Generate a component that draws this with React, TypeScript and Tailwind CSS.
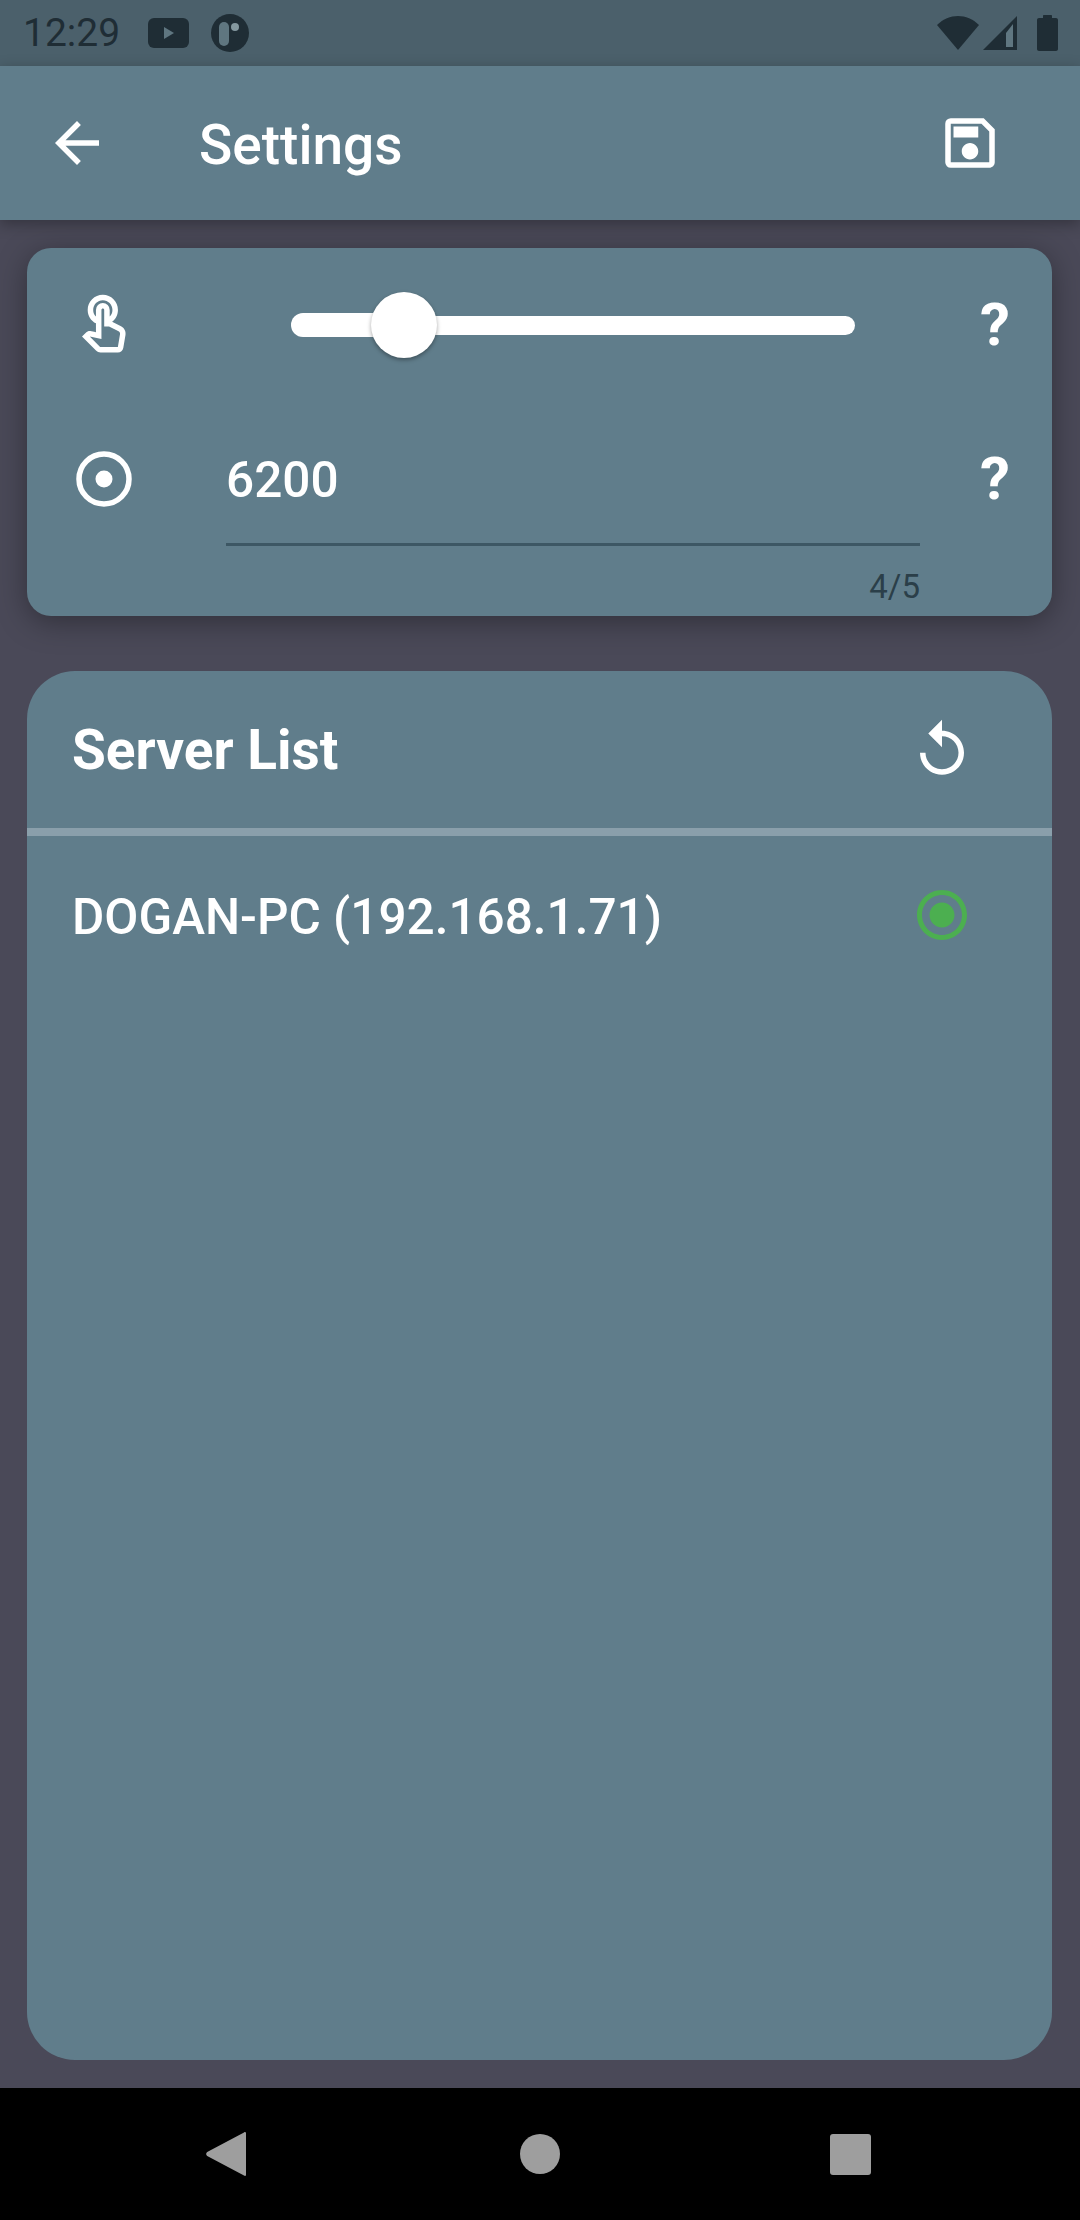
import { MdArrowBack, MdOutlineSave, MdOutlineTouchApp, MdRadioButtonChecked, MdReplay } from "react-icons/md";

const ink = "#1f2d35";

function StatusBar() {
  return (
    <div className="h-[66px] shrink-0 bg-[#4b606b] flex items-center pl-[23px] pr-[22px]">
      <span className="text-[39px] leading-none font-normal text-[#1f2d35] w-[93px]">12:29</span>
      <svg className="ml-[32px]" width="41" height="30" viewBox="0 0 41 30">
        <rect width="41" height="30" rx="6" fill={ink} />
        <path d="M16 9 L26 15 L16 21 Z" fill="#5f7680" />
      </svg>
      <svg className="ml-[22px]" width="38" height="38" viewBox="0 0 38 38">
        <circle cx="19" cy="19" r="19" fill={ink} />
        <rect x="8" y="8" width="10" height="24" rx="5" fill="#5f7680" />
        <circle cx="24" cy="13" r="4" fill="#84989f" />
      </svg>
      <div className="flex-1" />
      <svg width="42" height="34" viewBox="0 0 42 34">
        <path d="M0 9 C12 -3 30 -3 42 9 L21 34 Z" fill={ink} />
      </svg>
      <svg className="ml-[4px]" width="34" height="34" viewBox="0 0 34 34">
        <path d="M34 0 V34 H0 Z" fill={ink} />
        <path d="M23 17 L30 8 V31 H23 Z" fill="#5f7680" />
      </svg>
      <svg className="ml-[20px]" width="21" height="36" viewBox="0 0 21 36">
        <path d="M6 3 V1 C6 0.4 6.4 0 7 0 H14 C14.6 0 15 0.4 15 1 V3 H19 C20.1 3 21 3.9 21 5 V34 C21 35.1 20.1 36 19 36 H2 C0.9 36 0 35.1 0 34 V5 C0 3.9 0.9 3 2 3 Z" fill={ink} />
      </svg>
    </div>
  );
}

function Header() {
  return (
    <div className="relative z-10 h-[154px] shrink-0 bg-[#607d8b] flex items-center pl-[44px] pr-[77px] text-white shadow-[0_4px_14px_rgba(0,0,0,0.3)]">
      <MdArrowBack size={66} />
      <span className="ml-[89px] flex-1 text-[55px] pt-[4px] font-medium leading-none">Settings</span>
      <MdOutlineSave size={66} />
    </div>
  );
}

function Help() {
  return <span className="w-[66px] text-center text-[60px] font-bold leading-none text-white">?</span>;
}

function SettingsCard() {
  return (
    <div className="bg-[#607d8b] rounded-[24px] h-[368px] shrink-0 shadow-[0_6px_30px_rgba(0,0,0,0.35)] text-white">
      <div className="h-[154px] flex items-center pl-[44px] pr-[24px]">
        <MdOutlineTouchApp size={66} />
        <div className="relative ml-[89px] mr-[42px] flex-1 px-[65px] flex items-center h-[66px]">
          <div className="w-[112px] h-[24px] bg-white rounded-l-full" />
          <div className="flex-1 h-[19px] bg-white rounded-r-full" />
          <div className="absolute left-[145px] top-0 w-[66px] h-[66px] rounded-full bg-white shadow-[0_2px_4px_rgba(0,0,0,0.35)]" />
        </div>
        <Help />
      </div>
      <div className="h-[154px] flex items-center pl-[44px] pr-[24px]">
        <svg width="66" height="66" viewBox="0 0 66 66" className="shrink-0">
          <circle cx="33" cy="33" r="25" fill="none" stroke="white" strokeWidth="5.5" />
          <circle cx="33" cy="33" r="8.5" fill="white" />
        </svg>
        <div className="ml-[89px] mr-[42px] flex-1 self-start h-[144px] pt-[17px] flex items-center border-b-[3px] border-[#3d5764] text-[49.5px] font-medium leading-none">
          6200
        </div>
        <Help />
      </div>
      <div className="h-[60px] flex items-center justify-end pr-[132px] text-[33px] leading-none text-[#2b3f49]">4/5</div>
    </div>
  );
}

function ServerCard() {
  return (
    <div className="mt-[55px] flex-1 bg-[#607d8b] rounded-[48px] overflow-hidden text-white">
      <div className="h-[157px] flex items-center pl-[45px] pr-[77px]">
        <span className="flex-1 text-[55px] pt-[2px] font-bold leading-none">Server List</span>
        <MdReplay size={66} />
      </div>
      <div className="h-[8px] bg-[#8a9fab]" />
      <div className="h-[158px] flex items-center pl-[45px] pr-[80px]">
        <span className="flex-1 text-[49.5px] pt-[6px] font-medium leading-none">DOGAN-PC (192.168.1.71)</span>
        <MdRadioButtonChecked size={60} className="text-[#4caf50]" />
      </div>
    </div>
  );
}

function NavBar() {
  return (
    <div className="h-[132px] shrink-0 bg-black flex items-center pl-[206px]">
      <svg width="40" height="46" viewBox="0 0 40 46">
        <path d="M38 1.5 C39 0.6 40 1 40 2.5 V43.5 C40 45 39 45.4 38 44.5 L1.2 25 C-0.2 24 -0.2 22 1.2 21 Z" fill="#9e9e9e" />
      </svg>
      <div className="ml-[274px] w-[40px] h-[40px] rounded-full bg-[#9e9e9e]" />
      <div className="ml-[270px] w-[41px] h-[41px] rounded-[3px] bg-[#9e9e9e]" />
    </div>
  );
}

export default function App() {
  return (
    <div className="w-[1080px] h-[2220px] flex flex-col bg-[#4a4958] font-['Roboto',sans-serif] overflow-hidden">
      <StatusBar />
      <Header />
      <main className="flex-1 min-h-0 flex flex-col pt-[28px] pb-[28px] pl-[27px] pr-[28px]">
        <SettingsCard />
        <ServerCard />
      </main>
      <NavBar />
    </div>
  );
}
